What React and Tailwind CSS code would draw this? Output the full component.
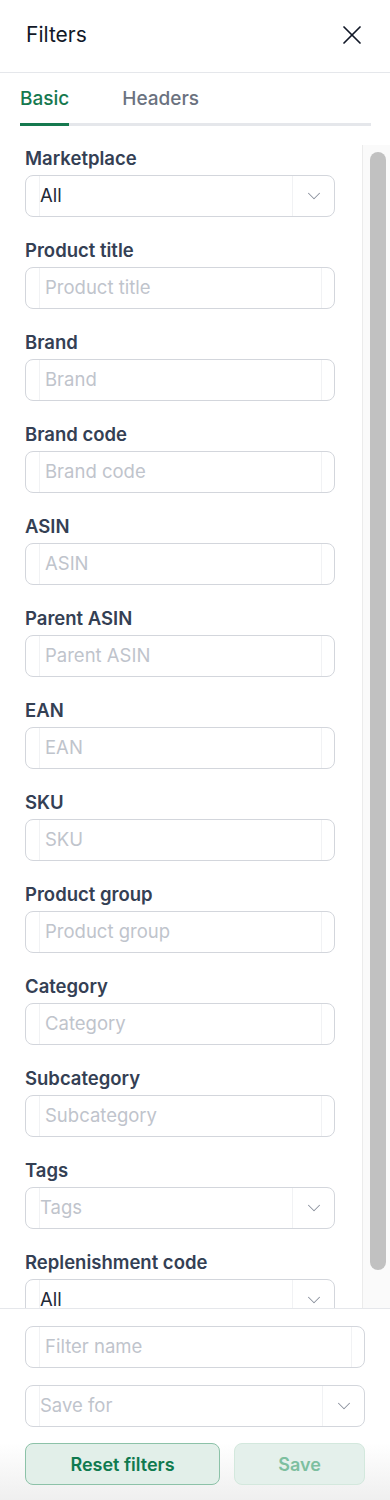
import { X, ChevronDown } from 'lucide-react'

const fields = [
  { label: 'Marketplace', type: 'select', value: 'All' },
  { label: 'Product title', type: 'input' },
  { label: 'Brand', type: 'input' },
  { label: 'Brand code', type: 'input' },
  { label: 'ASIN', type: 'input' },
  { label: 'Parent ASIN', type: 'input' },
  { label: 'EAN', type: 'input' },
  { label: 'SKU', type: 'input' },
  { label: 'Product group', type: 'input' },
  { label: 'Category', type: 'input' },
  { label: 'Subcategory', type: 'input' },
  { label: 'Tags', type: 'select', placeholder: 'Tags' },
  { label: 'Replenishment code', type: 'select', value: 'All' },
]

function TextInput({ placeholder }) {
  return (
    <div className="flex h-[42px] w-full rounded-[8px] border border-[#d3d6dc] bg-white">
      <div className="w-[14px] border-r border-[#f1f2f4]" />
      <div className="flex flex-1 items-center pl-[5px] text-[18.5px] text-[#bfc4cc]">{placeholder}</div>
      <div className="w-[13px] border-l border-[#f1f2f4]" />
    </div>
  )
}

function Select({ value, placeholder }) {
  return (
    <div className="flex h-[42px] w-full rounded-[8px] border border-[#d3d6dc] bg-white">
      <div className="w-[14px] border-r border-[#f1f2f4]" />
      <div className={`flex flex-1 items-center text-[18.5px] ${value ? 'text-[#1f2937]' : 'text-[#bfc4cc]'}`}>
        {value || placeholder}
      </div>
      <div className="flex w-[42px] items-center justify-center border-l border-[#f1f2f4]">
        <ChevronDown size={22} strokeWidth={1.1} className="text-[#8a909c]" />
      </div>
    </div>
  )
}

export default function App() {
  return (
    <div className="flex h-[1500px] w-[390px] flex-col overflow-hidden bg-white" style={{ fontFamily: 'Inter, "Noto Sans", sans-serif' }}>
      {/* Header */}
      <header className="flex h-[73px] shrink-0 items-center justify-between border-b border-[#e5e7eb] pl-[26px] pr-[22px] pb-[2px]">
        <h1 className="text-[21px] text-[#111827]">Filters</h1>
        <X size={32} strokeWidth={1.3} className="text-[#111827]" />
      </header>

      {/* Tabs */}
      <div className="shrink-0 px-[20px] pr-[19px] pt-[13px]">
        <div className="flex border-b-[3px] border-[#e5e7eb]">
          <div className="-mb-[3px] border-b-[3px] border-[#16794f] pb-[11px] text-[19px] font-medium leading-[26px] text-[#16794f]">Basic</div>
          <div className="ml-[53px] pb-[11px] text-[19px] font-medium leading-[26px] text-[#6b7280]">Headers</div>
        </div>
      </div>

      {/* Scroll area */}
      <div className="mt-[19px] flex min-h-0 flex-1">
        <div className="flex-1 overflow-hidden pl-[25px] pr-[27px] pt-[2px]">
          {fields.map((f) => (
            <div key={f.label} className="mb-[22px]">
              <div className="mb-[6px] text-[18.5px] font-semibold leading-[22px] text-[#344054]">{f.label}</div>
              {f.type === 'select' ? (
                <Select value={f.value} placeholder={f.placeholder} />
              ) : (
                <TextInput placeholder={f.label} />
              )}
            </div>
          ))}
        </div>
        <div className="w-[28px] shrink-0 border-l border-[#ebebeb] bg-[#fafafa] px-[7px] pt-[7px]">
          <div className="h-[1118px] w-[16px] rounded-full bg-[#c1c1c1]" />
        </div>
      </div>

      {/* Footer */}
      <footer className="shrink-0 border-t border-[#e5e7eb] bg-gradient-to-b from-white from-70% to-[#efefef] px-[25px] pt-[17px] pb-[15px]">
        <div className="flex h-[42px] w-full rounded-[8px] border border-[#d3d6dc] bg-white">
          <div className="w-[14px] border-r border-[#f1f2f4]" />
          <div className="flex flex-1 items-center pl-[5px] text-[18.5px] text-[#bfc4cc]">Filter name</div>
          <div className="w-[13px] border-l border-[#f1f2f4]" />
        </div>
        <div className="mt-[17px]">
          <Select placeholder="Save for" />
        </div>
        <div className="mt-[16px] flex gap-[14px]">
          <button className="h-[42px] w-[195px] rounded-[8px] border border-[#8cc2a8] bg-[#e2efe9] text-[18px] font-semibold text-[#0f7a4f]">
            Reset filters
          </button>
          <button className="h-[42px] flex-1 rounded-[8px] border border-[#d3e8dd] bg-[#e4f0eb] text-[18px] font-semibold text-[#7dbf9f]">
            Save
          </button>
        </div>
      </footer>
    </div>
  )
}
